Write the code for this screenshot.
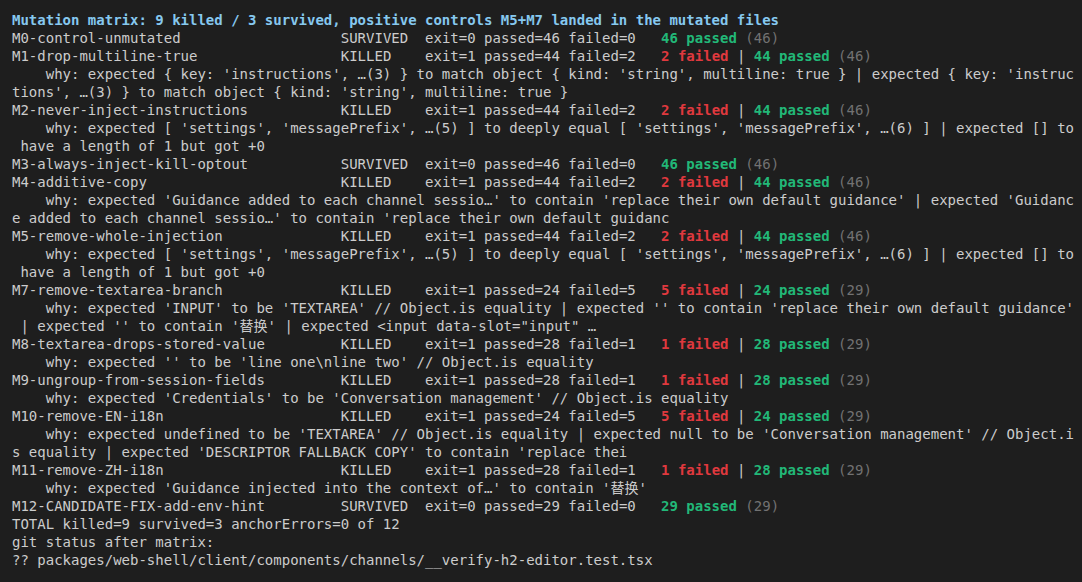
type Mutant = {
  name: string;
  status: 'KILLED' | 'SURVIVED';
  exit: number;
  passed: number;
  failed: number;
  total: number;
  why?: string[];
};

const mutants: Mutant[] = [
  { name: 'M0-control-unmutated', status: 'SURVIVED', exit: 0, passed: 46, failed: 0, total: 46 },
  {
    name: 'M1-drop-multiline-true', status: 'KILLED', exit: 1, passed: 44, failed: 2, total: 46,
    why: [
      "    why: expected { key: 'instructions', …(3) } to match object { kind: 'string', multiline: true } | expected { key: 'instruc",
      "tions', …(3) } to match object { kind: 'string', multiline: true }",
    ],
  },
  {
    name: 'M2-never-inject-instructions', status: 'KILLED', exit: 1, passed: 44, failed: 2, total: 46,
    why: [
      "    why: expected [ 'settings', 'messagePrefix', …(5) ] to deeply equal [ 'settings', 'messagePrefix', …(6) ] | expected [] to",
      ' have a length of 1 but got +0',
    ],
  },
  { name: 'M3-always-inject-kill-optout', status: 'SURVIVED', exit: 0, passed: 46, failed: 0, total: 46 },
  {
    name: 'M4-additive-copy', status: 'KILLED', exit: 1, passed: 44, failed: 2, total: 46,
    why: [
      "    why: expected 'Guidance added to each channel sessio…' to contain 'replace their own default guidance' | expected 'Guidanc",
      "e added to each channel sessio…' to contain 'replace their own default guidanc",
    ],
  },
  {
    name: 'M5-remove-whole-injection', status: 'KILLED', exit: 1, passed: 44, failed: 2, total: 46,
    why: [
      "    why: expected [ 'settings', 'messagePrefix', …(5) ] to deeply equal [ 'settings', 'messagePrefix', …(6) ] | expected [] to",
      ' have a length of 1 but got +0',
    ],
  },
  {
    name: 'M7-remove-textarea-branch', status: 'KILLED', exit: 1, passed: 24, failed: 5, total: 29,
    why: [
      "    why: expected 'INPUT' to be 'TEXTAREA' // Object.is equality | expected '' to contain 'replace their own default guidance'",
      " | expected '' to contain '替换' | expected <input data-slot=\"input\" …",
    ],
  },
  {
    name: 'M8-textarea-drops-stored-value', status: 'KILLED', exit: 1, passed: 28, failed: 1, total: 29,
    why: ["    why: expected '' to be 'line one\\nline two' // Object.is equality"],
  },
  {
    name: 'M9-ungroup-from-session-fields', status: 'KILLED', exit: 1, passed: 28, failed: 1, total: 29,
    why: ["    why: expected 'Credentials' to be 'Conversation management' // Object.is equality"],
  },
  {
    name: 'M10-remove-EN-i18n', status: 'KILLED', exit: 1, passed: 24, failed: 5, total: 29,
    why: [
      "    why: expected undefined to be 'TEXTAREA' // Object.is equality | expected null to be 'Conversation management' // Object.i",
      "s equality | expected 'DESCRIPTOR FALLBACK COPY' to contain 'replace thei",
    ],
  },
  {
    name: 'M11-remove-ZH-i18n', status: 'KILLED', exit: 1, passed: 28, failed: 1, total: 29,
    why: ["    why: expected 'Guidance injected into the context of…' to contain '替换'"],
  },
  { name: 'M12-CANDIDATE-FIX-add-env-hint', status: 'SURVIVED', exit: 0, passed: 29, failed: 0, total: 29 },
];

const MutantRow = ({ m }: { m: Mutant }) => (
  <>
    <div>
      {m.name.padEnd(39)}
      {m.status.padEnd(10)}
      {`exit=${m.exit} passed=${m.passed} failed=${m.failed}   `}
      {m.failed > 0 && (
        <>
          <span className="font-bold text-[#e0393e]">{m.failed} failed</span>
          {' | '}
        </>
      )}
      <span className="font-bold text-[#22b878]">{m.passed} passed</span>{' '}
      <span className="text-[#727272]">({m.total})</span>
    </div>
    {m.why?.map((line, i) => (
      <div key={i}>{line}</div>
    ))}
  </>
);

export default function App() {
  return (
    <div className="min-h-screen w-full bg-[#1e1e1e] pt-[11px] pl-[12px] text-[#cccccc] font-['DejaVu_Sans_Mono','Noto_Sans_CJK_SC',monospace] text-[14px] leading-[18px] whitespace-pre">
      <div className="font-bold text-[#86c8ef]">
        Mutation matrix: 9 killed / 3 survived, positive controls M5+M7 landed in the mutated files
      </div>
      {mutants.map((m) => (
        <MutantRow key={m.name} m={m} />
      ))}
      <div>TOTAL killed=9 survived=3 anchorErrors=0 of 12</div>
      <div>git status after matrix:</div>
      <div>?? packages/web-shell/client/components/channels/__verify-h2-editor.test.tsx</div>
    </div>
  );
}
